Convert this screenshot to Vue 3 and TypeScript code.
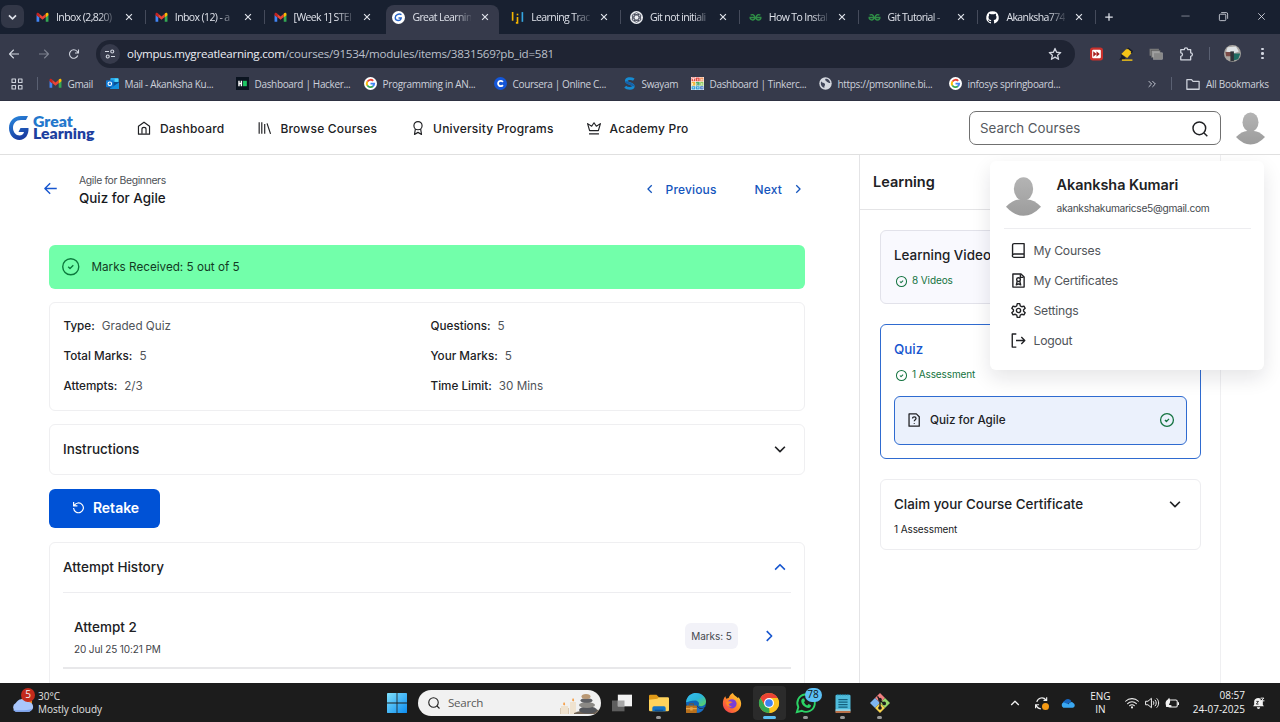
<script setup lang="ts">
import { h } from 'vue'

const gmail =
  '<path fill="#4285f4" d="M1 20V7l5 4v9z"/><path fill="#34a853" d="M18 20v-9l5-4v13z"/><path fill="#ea4335" d="M6 11V5l6 5 6-5v6l-6 5z"/><path fill="#c5221f" d="M1 8V6c0-3 3-3.500 5-1.500V12z"/><path fill="#fbbc04" d="M23 8V6c0-3-3-3.500-5-1.500V12z"/>'
const gfg =
  '<g fill="none" stroke="#2f8d46" stroke-width="2.600"><path d="M1 12h10c0 6-9 6-9 0M3 8c2-2 7-2 8 4M23 12H13c0 6 9 6 9 0M21 8c-2-2-7-2-8 4"/></g>'
const google =
  '<circle cx="12" cy="12" r="12" fill="#fff"/><g fill="none" stroke-width="3.400"><path stroke="#ea4335" d="M17 7.200A6.800 6.800 0 0 0 6.300 8.500"/><path stroke="#fbbc04" d="M6.300 8.300a6.800 6.800 0 0 0 0 7.400"/><path stroke="#34a853" d="M6.200 15.500a6.800 6.800 0 0 0 10.300 1.600"/><path stroke="#4285f4" d="M12 12.300h6.800a6.800 6.800 0 0 1-2.400 4.900"/></g>'

const art: Record<string, string> = {
  gmail,
  gfg,
  google,
  great:
    '<circle cx="12" cy="12" r="12" fill="#fff"/><path d="M17.500 6.500C12 4 6 7 6 12.500c0 6 9.500 7 11 .5h-5" fill="none" stroke="#2563c9" stroke-width="2.600"/>',
  track:
    '<g fill="none" stroke-width="3"><path stroke="#f4b400" d="M3 2v16M12 11v11h-3"/><path stroke="#f4b400" d="M12 5v3"/><path stroke="#35a6e0" d="M21 2v18"/></g>',
  gpt: '<circle cx="12" cy="12" r="12" fill="#eceef2"/><g fill="none" stroke="#22283a" stroke-width="1.300"><ellipse cx="12" cy="12" rx="4.500" ry="9"/><ellipse cx="12" cy="12" rx="4.500" ry="9" transform="rotate(60 12 12)"/><ellipse cx="12" cy="12" rx="4.500" ry="9" transform="rotate(120 12 12)"/></g>',
  github:
    '<path fill="#fff" d="M12 .5a11.500 11.500 0 0 0-3.700 22.400c.6.100.8-.3.800-.6v-2.200c-3.200.7-3.900-1.400-3.900-1.400-.5-1.300-1.300-1.700-1.300-1.700-1-.7.100-.7.100-.7 1.200.1 1.800 1.200 1.800 1.200 1 1.800 2.700 1.300 3.400 1 .1-.8.400-1.300.7-1.600-2.600-.3-5.300-1.300-5.300-5.700 0-1.300.5-2.300 1.200-3.100-.1-.3-.5-1.500.1-3.100 0 0 1-.3 3.200 1.200a11 11 0 0 1 5.800 0C17.100 4.700 18.100 5 18.100 5c.6 1.600.2 2.800.1 3.100.8.800 1.200 1.800 1.200 3.100 0 4.400-2.700 5.400-5.300 5.700.4.400.8 1.100.8 2.200v3.200c0 .3.200.7.800.6A11.500 11.500 0 0 0 12 .5z"/>',
  outlook:
    '<rect x="8" y="2" width="15" height="11" rx="1.500" fill="#28a8ea"/><path fill="#0a4f94" d="M7 9h17v12H7z"/><path fill="#50d9ff" d="M16 3h7v6h-7z"/><path fill="#1490df" d="M7 21l17-11v12H8z"/><rect y="6" width="14" height="13" rx="1.500" fill="#0f78d4"/><circle cx="7" cy="12.500" r="3.300" fill="none" stroke="#fff" stroke-width="2"/>',
  hacker:
    '<path fill="#0b1420" d="M0 0h24v24H0z"/><path stroke="#fff" stroke-width="2.600" d="M5.500 7v10M10 7v10M5 12h5"/><rect x="13" y="7" width="7" height="10" fill="#1dc763"/>',
  coursera:
    '<circle cx="12" cy="12" r="12" fill="#1456d8"/><path d="M16.500 9a5 5 0 1 0 0 6" fill="none" stroke="#fff" stroke-width="3.200"/>',
  swayam:
    '<path d="M20 5C14 1 6 3 6 7.500S19 12 19 17 8 22 4 18" fill="none" stroke="#168bd2" stroke-width="5"/><path d="M6 8c0 4 13 4 13 9" fill="none" stroke="#1560a8" stroke-width="4"/>',
  tinker:
    '<path fill="#fff" d="M0 0h24v24H0z"/><path fill="#e5473c" d="M1 1h7v7H1zM9 1h7v7H9z"/><path fill="#ef7b3b" d="M17 1h6v7h-6z"/><path fill="#f6b73c" d="M1 9h7v7H1z"/><path fill="#4bb36a" d="M9 9h7v7H9z"/><path fill="#8ac75a" d="M17 9h6v7h-6z"/><path fill="#2f9bd8" d="M1 17h7v6H1zM9 17h7v6H9z"/><path fill="#3a6fc4" d="M17 17h6v6h-6z"/><path stroke="#fff" stroke-width="1.500" d="M2 3h5M4.500 3v4M12.500 3v4M19 3v4M22 3v4M3 11v4M11 11v4h3M20 11v4M3 20h3M11 20h3M19 20h3"/>',
  globe:
    '<circle cx="12" cy="12" r="11.500" fill="#d5d8e0"/><path fill="#41465a" d="M4 8c2 4 6 2 7 5s-2 3-1 7C5 19 2 14 4 8zM12 3c6 0 8 4 9 8-3 1-4-2-6-2s-1-3-4-3z"/>',
  down: '<path d="M5.500 9l6.500 6.500L18.500 9"/>',
  up: '<path d="M5.500 15.500L12 9l6.500 6.500"/>',
  left: '<path d="M15 5.500L8.500 12l6.500 6.500"/>',
  right: '<path d="M9 5.500l6.500 6.500L9 18.500"/>',
  close: '<path d="M5 5l14 14M19 5L5 19"/>',
  plus: '<path d="M12 3v18M3 12h18"/>',
  back: '<path d="M22 12H3M11.500 3.500L3 12l8.500 8.500"/>',
  forward: '<path d="M2 12h19M12.500 3.500L21 12l-8.500 8.500"/>',
  reload: '<path d="M19.500 15A8.500 8.500 0 1 1 18 6.500l2.500 3M21 3v7h-7"/>',
  tune: '<path d="M2 7h8M14 17h8"/><circle cx="16.500" cy="7" r="3"/><circle cx="7.500" cy="17" r="3"/>',
  star: '<path d="M12 2.500l2.800 6.500 7 .6-5.300 4.600 1.600 6.900L12 17.400l-6.100 3.700 1.600-6.900L2.200 9.600l7-.6z"/>',
  ffwd: '<rect width="24" height="24" rx="5" fill="#c9302c"/><rect x="4" y="4" width="16" height="16" rx="2" fill="#fff"/><path fill="#a61e1e" d="M6 7l6 5-6 5zM12 7l6 5-6 5z"/>',
  marker:
    '<path fill="#191d28" d="M3 11l8 8-2 3H0l4-5z"/><path fill="#f5c518" d="M13 3l9 7-8 9-10-7z"/><path fill="#191d28" d="M16 1l8 6-2 4-2-1-6-5-1-1z"/><path fill="#f5c518" d="M15 3l6 5-2 3-7-5z"/><path stroke="#f5c518" stroke-width="2.400" d="M5 22.500h18"/>',
  cards:
    '<rect x="1" y="3" width="16" height="12" fill="#777"/><rect x="4" y="6" width="15" height="12" fill="#9a9a9a" stroke="#5c5c5c"/><rect x="8" y="10" width="15" height="11" fill="#888" stroke="#aaa"/>',
  puzzle:
    '<path d="M3 4.500h6c0-4 6-4 6 0h5v5.500c4 0 4 6 0 6v6H3v-6c4 0 4-6 0-6z"/>',
  apps: '<path d="M2 2h7v7H2zM15 2h7v7h-7zM2 15h7v7H2zM15 15h7v7h-7z"/>',
  more: '<path d="M4 5l7 7-7 7M13 5l7 7-7 7"/>',
  folder: '<path d="M1.500 4.500h8l2.500 3h10.500V21H1.500z"/>',
  minimise: '<path d="M3 11h18"/>',
  restore: '<rect x="3" y="7" width="14" height="14" rx="2"/><path d="M7 3.500h11a3 3 0 0 1 3 3V17"/>',
  photo:
    '<circle cx="12" cy="12" r="12" fill="#a9a5a0"/><path fill="#dfe3e6" d="M5 3l12-1 4 7-8 3-10-3z"/><path fill="#7c4c48" d="M2 10h9v6H3z"/><path fill="#1f6b62" d="M13 12h10l-3 8-7 2z"/><path fill="#30343a" d="M9 9h5v14H9z"/>',
  home: '<path d="M2.500 22.500V9L12 2l9.500 7v13.500z"/><path d="M8.500 22v-8c0-4 7-4 7 0v8"/>',
  library: '<path d="M2 2v20M6.500 2v20M11.500 5v17M15.500 4l6 18"/>',
  ribbon: '<circle cx="12" cy="8" r="7"/><path d="M7.500 13.500L6 23l6-3.500 6 3.500-1.500-9.500"/>',
  crown: '<path d="M4.500 16.500L1 4.500l7 4.500 4-6 4 6 7-4.500-3.500 12zM3.500 22h17"/>',
  search: '<circle cx="11" cy="11" r="9.500"/><path d="M18 18l5 5"/>',
  check: '<circle cx="12" cy="12" r="11"/><path d="M8.500 12l2.500 2.500 4.500-4.500"/>',
  retry: '<path d="M4 8.500A9 9 0 1 1 3 13M3 2v7h7"/>',
  quizfile: '<path d="M3.500 1.500H16l5 5v16H3.500z"/><path d="M9.500 9.500c0-4 6-3.500 6 0 0 2-3 2-3 4.500M12.500 17v1.500"/>',
  book: '<path d="M2.500 20V3.500A2.500 2.500 0 0 1 5 1h16v22H5a2.500 2.500 0 0 1 0-5.500h16"/>',
  cert: '<path d="M3 1.500h13l5 5v16H3z"/><path d="M15 2v5h5"/><circle cx="12" cy="10.500" r="3"/><path d="M10 13l-1.500 6 3.500-1.500 3.500 1.500L14 13"/>',
  gear: '<path d="M10 1h4l.8 3.500 2.500 1.500 3.400-1 2 3.500-2.600 2.400v2.200l2.600 2.400-2 3.500-3.400-1-2.500 1.500L14 23h-4l-.8-3.500L6.700 18l-3.400 1-2-3.500 2.600-2.400v-2.200L1.300 8.500l2-3.500 3.400 1 2.500-1.500z"/><circle cx="12" cy="12" r="3.400"/>',
  logout: '<path d="M8.500 1.500H2v21h6.500M8 12h14M16.500 6.500L22 12l-5.500 5.500"/>',
  cloudsun:
    '<circle cx="16" cy="11" r="6" fill="#f28b22"/><path fill="#a9c6fb" d="M5 21a5 5 0 0 1 0-9 7 7 0 0 1 12-1 5 5 0 0 1 2 10z"/><path fill="#7da4ef" d="M2 19c4 1 15 1 20-1-1 2-2 3-4 3H5c-1 0-2-1-3-2z"/>',
  windows:
    '<linearGradient id="win" x1="0" y1="0" x2="1" y2="1"><stop stop-color="#7fe0fb"/><stop offset="1" stop-color="#0c8cf0"/></linearGradient><path fill="url(#win)" d="M0 1a1 1 0 0 1 1-1h10.500v11.500H0zM12.500 0H23a1 1 0 0 1 1 1v10.500H12.500zM0 12.500h11.500V24H1a1 1 0 0 1-1-1zM12.500 12.500H24V23a1 1 0 0 1-1 1H12.500z"/>',
  taskview:
    '<path fill="#5d5d5d" d="M0 9h15v13H0z"/><path fill="#f2f2f2" d="M7 2h17v14H7z"/><path fill="#a7a7a7" d="M7 9h8v7H7z"/>',
  explorer:
    '<path fill="#e09a17" d="M0 3.500A1.500 1.500 0 0 1 1.500 2H9l3 3v5H0z"/><path fill="#ffd35c" d="M0 8l10-1 2-2h10.500A1.500 1.500 0 0 1 24 6.500v14a1.500 1.500 0 0 1-1.500 1.500h-21A1.500 1.500 0 0 1 0 20.500z"/><path fill="#1573c4" d="M4 22v-4a2 2 0 0 1 2-2h12a2 2 0 0 1 2 2v4z"/><path fill="#0b559c" d="M7 20h10v2H7z"/>',
  edge:
    '<linearGradient id="ed" x1="0" y1="0" x2="1" y2="1"><stop stop-color="#36bff0"/><stop offset=".5" stop-color="#2bb5d8"/><stop offset="1" stop-color="#62d84e"/></linearGradient><circle cx="12" cy="12" r="12" fill="#1164b8"/><path fill="url(#ed)" d="M0 11C1 3 7 0 12 0c8 0 12 6 12 10 0 5-5 7-9 5 2-3-1-6-4-6-5 0-9 2-11 2z"/><path fill="#1c1c1c" d="M13 14c1 5 6 5 10 3l1 1-3 6h-8z"/><path fill="#1b6fc4" d="M12 12c1 7 6 8 10 6-2 4-5 6-9 6z"/><rect y="15" width="13" height="9" rx="1" fill="#b8701c"/><path fill="#e7a548" d="M0 18h13v1.500H0zM5 17h3v4H5z"/><path fill="none" stroke="#8b5318" d="M4 15v-2h5v2"/>',
  firefox:
    '<linearGradient id="ff" x1="1" y1="0" x2="0" y2="1"><stop stop-color="#ffdf3c"/><stop offset=".5" stop-color="#ff8a25"/><stop offset="1" stop-color="#f02d59"/></linearGradient><path fill="url(#ff)" d="M4 4l1 3 3-1c1-3 3-5 5-6 1 3 4 4 6 6l1-1c2 3 3 5 3 8 0 6-5 11-11 11S1 19 1 13c0-4 1-7 3-9z"/><circle cx="12" cy="13" r="5.500" fill="#7b3fd8"/><path fill="#ff8a25" d="M5 11c3-2 5-1 8 0-2 0-3 2-5 2 0 2 2 3 4 3-4 2-7-1-7-5z"/>',
  chrome:
    '<circle cx="12" cy="12" r="12" fill="#fcc31e"/><path fill="#ea4335" d="M1.600 6A12 12 0 0 1 22.400 6H12l-5 9z"/><path fill="#34a853" d="M1.600 6l5.200 9 5.200 3 1 5.950A12 12 0 0 1 1.600 6z"/><path fill="#fcc31e" d="M12 6h10.400A12 12 0 0 1 12 24l5.200-9z"/><circle cx="12" cy="12" r="6" fill="#fff"/><circle cx="12" cy="12" r="4.600" fill="#3d82f0"/>',
  whatsapp:
    '<path fill="#1c1c1c" stroke="#2bd366" stroke-width="2.300" d="M1 23l1.800-6A10.500 10.500 0 1 1 7 21.300z"/><path fill="#2bd366" d="M8 6.500l1.800.2 1 2.800-1.200 1.500c1 2 2 3 4 4l1.500-1.700 2.900 1.500c0 2-1.300 3.200-3.200 3.200-4 0-8.500-4.300-8.500-8.300 0-1.700.7-2.700 1.700-3.200z"/>',
  notepad:
    '<rect x="3" y="2" width="18" height="21" rx="1.500" fill="#4fbcdc"/><path fill="#e8f4f8" d="M3 20h18v1H3z"/><path fill="#b8704a" d="M3 21.500h18V24H3z"/><path stroke="#14607e" stroke-width="1.400" d="M6.500 8h11M6.500 11h11M6.500 14h11M6.500 17h11"/><path stroke="#146a8a" stroke-width="1.600" stroke-dasharray="1.500 1.500" d="M5 2h14"/>',
  git: '<path fill="#f08080" d="M12 0l6 6-6 6-6-6z"/><path fill="#7fb5ee" d="M6 6l6 6-6 6-6-6z"/><path fill="#97d86c" d="M18 6l6 6-6 6-6-6z"/><path fill="#f5d24f" d="M12 12l6 6-6 6-6-6z"/><g fill="#1c1c1c" stroke="#1c1c1c" stroke-width="1.600"><path fill="none" d="M9 4l3 5v10M12 9l5 4"/><circle cx="12" cy="18" r="1.400"/><circle cx="12" cy="8" r="1.400"/><circle cx="17" cy="12.500" r="1.400"/></g>',
  sync: '<g fill="none" stroke="#eee" stroke-width="2"><path d="M3 10a9 9 0 0 1 16-3M20 2v5.500h-5.500M2 15a9 9 0 0 0 8 7M1 21v-6h6"/></g><circle cx="18" cy="18" r="6" fill="#f59a13"/>',
  onedrive:
    '<path fill="#1566c0" d="M4 17A6 6 0 0 1 6 8a7 7 0 0 1 12 1l-8 6z"/><path fill="#3aa8f2" d="M4 20a5 5 0 0 1 0-9c4 0 5 2 9 3 2-4 6-5 8-2 4 2 3 8-1 8z"/>',
  wifi: '<g fill="none" stroke="#f2f2f2" stroke-width="1.800" stroke-linecap="round"><path d="M1 9c6-6 16-6 22 0M4.500 13c4-4 11-4 15 0M8 16.500c2-2 6-2 8 0"/></g><circle cx="12" cy="19.500" r="1.800" fill="#f2f2f2"/>',
  volume:
    '<g fill="none" stroke="#f2f2f2" stroke-width="1.700" stroke-linejoin="round"><path d="M1 9h4l6-5v16l-6-5H1zM14 9c1.500 1.500 1.500 4.500 0 6M17 6.500c3 3 3 8 0 11M20 4c4.500 4.500 4.500 11.500 0 16"/></g>',
  battery:
    '<rect x="6" y="7" width="15" height="12" rx="2.500" fill="none" stroke="#f2f2f2" stroke-width="1.800"/><path stroke="#f2f2f2" stroke-width="2" d="M23 10.500v5"/><path fill="#f2f2f2" d="M1 13C1 7 5 7 7 3c3 5 2 10-1 12l5 1v3H2z"/>',
  bell: '<path fill="#f2f2f2" d="M2 18l2-3V9c0-6 8-8 12-5v3h4v8l2 3zM9 20h6c0 4-6 4-6 0z"/><path fill="none" stroke="#1c1c1c" stroke-width="1.600" d="M8 9h4l-4 5h4"/><path fill="none" stroke="#f2f2f2" stroke-width="1.800" d="M16 3h6l-5 5h6"/>',
  stones:
    '<path fill="#d9c9b4" d="M0 18h9v6H0z"/><path fill="#efe2cf" d="M1 16h7v8H1zM10 12h6v12h-6z"/><path fill="#f6a04a" d="M4 12q2 2 .5 3.500Q2 15 4 12zM13 8q2 2 .5 3.500Q11 11 13 8z"/><path fill="#6f6254" d="M14 23q12-5 27-3l-4 4H14z"/><ellipse cx="28" cy="20" rx="9" ry="3.500" fill="#54565b"/><ellipse cx="27" cy="15" rx="8" ry="3" fill="#8b8985"/><ellipse cx="26.500" cy="10.500" rx="6" ry="2.300" fill="#5f6064"/><ellipse cx="26" cy="6.500" rx="4.500" ry="2.500" fill="#b99874"/>',
  person:
    '<linearGradient id="grey" x1="0" y1="0" x2="0" y2="32" gradientUnits="userSpaceOnUse"><stop stop-color="#b4b4b4"/><stop offset="1" stop-color="#9c9c9c"/></linearGradient><g fill="url(#grey)"><ellipse cx="14.500" cy="9.700" rx="8" ry="9.700"/><path d="M0 24.500Q6 18.500 11 18.500h7q5 0 11 6Q22 32 14.500 32T0 24.500z"/></g>',
}

interface IconProps {
  name: string
  box?: string
}
const Icon = (props: IconProps) =>
  h('svg', { viewBox: props.box ?? '0 0 24 24', class: 'icon', innerHTML: art[props.name] })
Icon.props = ['name', 'box']

const tabs = [
  { icon: 'gmail', title: 'Inbox (2,820)' },
  { icon: 'gmail', title: 'Inbox (12) - a' },
  { icon: 'gmail', title: '[Week 1] STEI' },
  { icon: 'great', title: 'Great Learnin', active: true },
  { icon: 'track', title: 'Learning Trac' },
  { icon: 'gpt', title: 'Git not initiali' },
  { icon: 'gfg', title: 'How To Instal' },
  { icon: 'gfg', title: 'Git Tutorial -' },
  { icon: 'github', title: 'Akanksha774' },
]
const bookmarks = [
  { icon: 'gmail', title: 'Gmail' },
  { icon: 'outlook', title: 'Mail - Akanksha Ku...' },
  { icon: 'hacker', title: 'Dashboard | Hacker...' },
  { icon: 'google', title: 'Programming in AN...' },
  { icon: 'coursera', title: 'Coursera | Online C...' },
  { icon: 'swayam', title: 'Swayam' },
  { icon: 'tinker', title: 'Dashboard | Tinkerc...' },
  { icon: 'globe', title: 'https://pmsonline.bi...' },
  { icon: 'google', title: 'infosys springboard...' },
]
const nav = [
  { icon: 'home', label: 'Dashboard' },
  { icon: 'library', label: 'Browse Courses' },
  { icon: 'ribbon', label: 'University Programs' },
  { icon: 'crown', label: 'Academy Pro' },
]
const facts = [
  ['Type:', 'Graded Quiz'],
  ['Questions:', '5'],
  ['Total Marks:', '5'],
  ['Your Marks:', '5'],
  ['Attempts:', '2/3'],
  ['Time Limit:', '30 Mins'],
]
const menu = [
  { icon: 'book', label: 'My Courses' },
  { icon: 'cert', label: 'My Certificates' },
  { icon: 'gear', label: 'Settings' },
  { icon: 'logout', label: 'Logout' },
]
const apps = [
  { icon: 'taskview' },
  { icon: 'explorer', running: true },
  { icon: 'edge' },
  { icon: 'firefox' },
  { icon: 'chrome', running: true, focused: true },
  { icon: 'whatsapp', running: true, count: 78 },
  { icon: 'notepad', running: true },
  { icon: 'git', running: true },
]
</script>

<template>
  <div class="screen">
    <div class="tabstrip">
      <div class="tabsearch"><Icon name="down" class="line" /></div>
      <div v-for="(t, i) in tabs" :key="i" class="tab" :class="{ active: t.active, bare: i === 2 || t.active }">
        <Icon :name="t.icon" class="fav" />
        <span class="tabtitle">{{ t.title }}</span>
        <Icon name="close" class="line x" />
      </div>
      <Icon name="plus" class="line newtab" />
      <div class="controls">
        <Icon name="minimise" class="line thin dim" />
        <Icon name="restore" class="line thin" />
        <Icon name="close" class="line thin" />
      </div>
    </div>

    <div class="toolbar">
      <div class="navbtns">
        <Icon name="back" class="line" />
        <Icon name="forward" class="line off" />
        <Icon name="reload" class="line" />
      </div>
      <div class="omnibox">
        <div class="site"><Icon name="tune" class="line" /></div>
        <span class="url"><b>olympus.mygreatlearning.com</b>/courses/91534/modules/items/3831569?pb_id=581</span>
        <Icon name="star" class="line star" />
      </div>
      <div class="exts">
        <Icon name="ffwd" class="ff" />
        <Icon name="marker" />
        <Icon name="cards" />
        <Icon name="puzzle" class="line" />
      </div>
      <i class="bar"></i>
      <Icon name="photo" class="photo" />
      <div class="dots"><i></i><i></i><i></i></div>
    </div>

    <div class="bookmarks">
      <Icon name="apps" class="line appgrid" />
      <i class="bar first"></i>
      <div class="marks">
        <div v-for="b in bookmarks" :key="b.title" class="mark">
          <Icon :name="b.icon" class="fav" />
          <span>{{ b.title }}</span>
        </div>
      </div>
      <Icon name="more" class="line more" />
      <i class="bar"></i>
      <Icon name="folder" class="line folder" />
      <span class="all">All Bookmarks</span>
    </div>

    <header class="sitehead">
      <div class="logo">
        <svg class="g" viewBox="0 0 20 26">
          <defs>
            <linearGradient id="lg" x1="0" y1="0" x2="0.400" y2="1">
              <stop stop-color="#2a8be0" />
              <stop offset="1" stop-color="#1a3fa3" />
            </linearGradient>
          </defs>
          <path
            d="M19 1l-2 4h-5C7 5 4 8.500 4 13c0 4 3 7.500 6.500 7.500 2.500 0 4-1.500 4.500-3.500h-5.500l2-4h8c.5 7-3.500 12-9 12C4.500 25 0 19.500 0 13 0 6 5 1 12 1z"
            fill="url(#lg)"
          />
        </svg>
        <div class="brand"><span>Great</span><span class="deep">Learning</span></div>
      </div>
      <nav>
        <a v-for="n in nav" :key="n.label" :class="n.icon"><Icon :name="n.icon" class="line" /><span>{{ n.label }}</span></a>
      </nav>
      <div class="search"><span>Search Courses</span><Icon name="search" class="line" /></div>
      <Icon name="person" box="0 0 29 32" class="person small" />
    </header>

    <div class="page">
      <main>
        <div class="title">
          <Icon name="back" class="line goback" />
          <div class="names"><small>Agile for Beginners</small><h1>Quiz for Agile</h1></div>
          <a class="prev"><Icon name="left" class="line" />Previous</a>
          <a class="next">Next<Icon name="right" class="line" /></a>
        </div>
        <div class="banner"><Icon name="check" class="line" />Marks Received: 5 out of 5</div>
        <dl class="card facts">
          <div v-for="f in facts" :key="f[0]"><dt>{{ f[0] }}</dt><dd>{{ f[1] }}</dd></div>
        </dl>
        <div class="card instructions"><h2>Instructions</h2><Icon name="down" class="line" /></div>
        <button class="retake"><Icon name="retry" class="line" />Retake</button>
        <section class="card history">
          <div class="hhead"><h2>Attempt History</h2><Icon name="up" class="line" /></div>
          <div class="attempt">
            <div class="when"><h2>Attempt 2</h2><small>20 Jul 25 10:21 PM</small></div>
            <span class="badge">Marks: 5</span>
            <Icon name="right" class="line" />
          </div>
        </section>
      </main>

      <aside>
        <div class="lhead">Learning</div>
        <div class="modules">
          <div class="module videos">
            <h3>Learning Videos</h3>
            <p class="done"><Icon name="check" class="line" />8 Videos</p>
          </div>
          <div class="module quiz">
            <h3>Quiz</h3>
            <p class="done"><Icon name="check" class="line" />1 Assessment</p>
            <div class="lesson">
              <Icon name="quizfile" class="line" /><span>Quiz for Agile</span><Icon name="check" class="line ok" />
            </div>
          </div>
          <div class="module claim">
            <h3>Claim your Course Certificate<Icon name="down" class="line" /></h3>
            <p>1 Assessment</p>
          </div>
        </div>
      </aside>

      <div class="menu">
        <div class="who">
          <Icon name="person" box="0 0 29 32" class="person" />
          <div><strong>Akanksha Kumari</strong><span>akankshakumaricse5@gmail.com</span></div>
        </div>
        <a v-for="m in menu" :key="m.label"><Icon :name="m.icon" class="line" />{{ m.label }}</a>
      </div>
    </div>

    <footer class="taskbar">
      <div class="weather">
        <div class="wicon"><Icon name="cloudsun" /><em>5</em></div>
        <div class="wtext"><span>30°C</span><span>Mostly cloudy</span></div>
      </div>
      <Icon name="windows" class="win" />
      <div class="find"><Icon name="search" class="line" /><span>Search</span><Icon name="stones" box="0 0 41 26" class="stones" /></div>
      <div class="apps">
        <div v-for="a in apps" :key="a.icon" class="app" :class="{ running: a.running, focused: a.focused }">
          <Icon :name="a.icon" />
          <em v-if="a.count">{{ a.count }}</em>
        </div>
      </div>
      <div class="tray">
        <Icon name="up" class="line chev" />
        <Icon name="sync" class="sync" />
        <Icon name="onedrive" class="drive" />
        <div class="lang"><span>ENG</span><span>IN</span></div>
        <Icon name="wifi" class="st" />
        <Icon name="volume" class="st" />
        <Icon name="battery" class="st" />
        <div class="clock"><span>08:57</span><span>24-07-2025</span></div>
        <Icon name="bell" class="bell" />
      </div>
    </footer>
  </div>
</template>

<style>
html,
body {
  overflow: hidden;
}
</style>

<style scoped>
* {
  box-sizing: border-box;
}
.screen {
  width: 1280px;
  height: 722px;
  display: flex;
  flex-direction: column;
  overflow: hidden;
  background: #fff;
  font-family: Inter, sans-serif;
  color: #202124;
  white-space: nowrap;
}
.icon {
  display: block;
  flex: none;
  width: 14px;
  height: 14px;
  overflow: visible;
}
.line {
  fill: none;
  stroke: currentColor;
  stroke-width: 2.2;
  stroke-linejoin: round;
}
.thin {
  stroke-width: 1.8;
}
h1,
h2,
h3,
p,
dl,
dd {
  margin: 0;
}

/* Browser window */
.tabstrip,
.toolbar,
.bookmarks,
.taskbar {
  font-family: 'Open Sans', 'Noto Sans', sans-serif;
}
.tabstrip {
  flex: none;
  height: 34px;
  display: flex;
  background: #182030;
  color: #dfe2ea;
  font-size: 10.500px;
}
.tabsearch {
  width: 23px;
  height: 23px;
  margin: 5px 6px 0 1px;
  border-radius: 7px;
  background: #323747;
  display: flex;
  align-items: center;
  justify-content: center;
}
.tabsearch .icon {
  stroke-width: 3;
  width: 13px;
}
.tab {
  position: relative;
  width: 118.800px;
  height: 34px;
  flex: none;
  display: flex;
  align-items: center;
  padding-left: 6px;
}
.tab::after {
  content: '';
  position: absolute;
  left: 115px;
  top: 10px;
  width: 1px;
  height: 14px;
  background: #454b5b;
}
.tab.bare::after {
  display: none;
}
.tab.active::before {
  content: '';
  position: absolute;
  left: 0;
  top: 5px;
  width: 113px;
  height: 29px;
  border-radius: 8px 8px 0 0;
  background: #363a4b;
}
.tab .icon,
.tabtitle {
  position: relative;
}
.fav {
  width: 13px;
  height: 13px;
}
.tabtitle {
  width: 59px;
  margin-left: 7px;
  overflow: hidden;
  letter-spacing: -0.6px;
  line-height: 18px;
  mask-image: linear-gradient(90deg, #000 72%, rgba(0, 0, 0, 0.15));
}
.x {
  width: 10px;
  height: 10px;
  margin-left: 9px;
  stroke-width: 2.8;
}
.newtab {
  width: 10px;
  height: 10px;
  margin: 12px 0 0 5px;
  stroke-width: 3;
}
.controls {
  margin-left: auto;
  display: flex;
  gap: 27px;
  padding: 11px 13px 0 0;
}
.controls .icon {
  width: 11px;
  height: 11px;
}
.dim {
  opacity: 0.6;
}
.toolbar {
  flex: none;
  height: 35px;
  padding-top: 4px;
  display: flex;
  align-items: center;
  background: #363a4b;
  color: #d2d6e0;
}
.navbtns {
  display: flex;
  gap: 18px;
  margin: 0 16px 0 8px;
}
.navbtns .icon {
  width: 12px;
  height: 12px;
}
.off {
  opacity: 0.45;
}
.omnibox {
  width: 979px;
  height: 28px;
  border-radius: 14px;
  background: #1f2433;
  display: flex;
  align-items: center;
  padding: 0 13px 0 4px;
}
.site {
  width: 20px;
  height: 20px;
  border-radius: 50%;
  background: #363a4b;
  display: flex;
  align-items: center;
  justify-content: center;
}
.site .icon {
  width: 12px;
  height: 12px;
}
.url {
  margin-left: 7px;
  flex: 1;
  font-size: 11.600px;
  letter-spacing: -0.24px;
  color: #bcc0cb;
}
.url b {
  font-weight: 400;
  color: #eceef4;
}
.exts {
  display: flex;
  gap: 16px;
  margin-left: 15px;
}
.exts .ff {
  width: 13px;
}
.bar {
  width: 1px;
  height: 13px;
  background: #5a6072;
}
.toolbar > .bar {
  margin: 0 14px 0 16px;
}
.photo {
  width: 17px;
  height: 17px;
}
.dots {
  display: flex;
  flex-direction: column;
  gap: 2px;
  margin-left: 20px;
}
.dots i {
  width: 2.500px;
  height: 2.500px;
  border-radius: 50%;
  background: #d2d6e0;
}
.bookmarks {
  flex: none;
  height: 32px;
  display: flex;
  align-items: center;
  padding-bottom: 2px;
  background: #363a4b;
  color: #cdd1db;
  font-size: 10px;
  border-bottom: 1px solid #2e3242;
}
.appgrid {
  width: 12px;
  height: 12px;
  margin: 0 14px 0 11px;
}
.bar.first {
  margin-right: 11px;
}
.marks {
  width: 1098px;
  display: grid;
  grid-template-columns: 57px 130px 128px 130px 129px 68px 128px 130px 1fr;
  letter-spacing: -0.33px;
}
.mark {
  display: flex;
  align-items: center;
  gap: 5.500px;
}
.more {
  width: 10px;
  height: 10px;
}
.more + .bar {
  margin: 0 14px;
}
.folder {
  width: 14px;
  height: 14px;
}
.all {
  margin-left: 6px;
  letter-spacing: -0.3px;
}

/* Site header */
.sitehead {
  flex: none;
  height: 54px;
  display: flex;
  align-items: center;
  border-bottom: 1px solid #e0e0e0;
  padding-left: 9px;
}
.logo {
  display: flex;
  width: 128px;
  gap: 4px;
}
.g {
  width: 20px;
  height: 26px;
}
.brand {
  font: 800 15.800px/12px Lato, sans-serif;
  color: #2377cc;
  display: flex;
  flex-direction: column;
}
.deep {
  color: #1d3fa0;
}
nav {
  display: flex;
  gap: 34px;
  flex: 1;
  font-size: 12px;
  font-weight: 500;
  letter-spacing: 0.2px;
}
nav a {
  display: flex;
  align-items: center;
  gap: 9px;
}
nav a span {
  padding-top: 1px;
}
nav .library,
nav .ribbon {
  gap: 8px;
}
nav .crown {
  margin-left: -1px;
}
nav .icon {
  stroke-width: 2;
}
.search {
  width: 252px;
  height: 34px;
  border: 1px solid #707070;
  border-radius: 7px;
  display: flex;
  align-items: center;
  justify-content: space-between;
  padding: 0 12px 0 10px;
  font-size: 13.300px;
  color: #555960;
}
.search .icon {
  width: 16px;
  height: 16px;
  margin-top: 2px;
  color: #202124;
  stroke-width: 2.2;
}
.person {
  width: 35px;
  height: 39px;
}
.person.small {
  width: 29px;
  height: 33px;
  margin: 1px 15px 0;
}

/* Course page */
.page {
  position: relative;
  height: 528px;
  display: flex;
  overflow: hidden;
}
main {
  width: 859px;
  padding: 0 54px 0 49px;
  display: flex;
  flex-direction: column;
  align-items: flex-start;
}
main > * {
  flex: none;
}
.title {
  height: 90px;
  align-self: stretch;
  display: flex;
  align-items: center;
  padding-bottom: 22px;
  font-size: 12px;
  font-weight: 500;
  color: #1455bd;
}
.goback {
  width: 15px;
  height: 15px;
  margin: -1px 0 0 -6px;
  color: #1756cf;
}
.names {
  margin-left: 21px;
  flex: 1;
  color: #17191d;
}
.names small {
  display: block;
  font-size: 10.400px;
  letter-spacing: -0.36px;
  line-height: 15px;
  font-weight: 400;
  color: #4d5156;
  margin-top: 4px;
}
h1 {
  font-size: 13.400px;
  line-height: 21px;
  font-weight: 500;
}
.title a {
  display: flex;
  align-items: center;
  letter-spacing: 0.15px;
}
.prev {
  gap: 9px;
  margin-right: 38px;
}
.next {
  gap: 9px;
}
.banner {
  align-self: stretch;
  height: 43.500px;
  border-radius: 6px;
  background: #72ffaa;
  display: flex;
  align-items: center;
  gap: 12px;
  padding-left: 13px;
  font-size: 11.700px;
  color: #123b24;
}
.banner .icon {
  width: 17.500px;
  height: 17.500px;
  color: #0c7a3d;
  stroke-width: 1.9;
}
.card {
  align-self: stretch;
  border: 1px solid #efeff1;
  border-radius: 6px;
}
.facts {
  height: 108.500px;
  margin-top: 13.500px;
  padding: 7.500px 13.500px;
  display: grid;
  grid-template-columns: 367px 1fr;
  grid-auto-rows: 30px;
  font-size: 11.700px;
}
.facts div {
  display: flex;
  align-items: center;
  gap: 7px;
}
dt {
  font-weight: 500;
}
dd {
  color: #505459;
}
.instructions {
  margin-top: 13.500px;
  height: 51px;
}
.instructions,
.hhead {
  display: flex;
  align-items: center;
  justify-content: space-between;
  padding: 0 15px 1px 13px;
}
h2 {
  font-size: 13.500px;
  font-weight: 500;
}
.instructions .icon,
.hhead .icon {
  width: 18px;
  height: 18px;
}
.retake {
  width: 111px;
  height: 39px;
  margin: 14px 0;
  padding: 0 0 2px 2px;
  border: 0;
  border-radius: 6px;
  background: #0052d6;
  color: #fff;
  display: flex;
  align-items: center;
  justify-content: center;
  gap: 8px;
  font: 600 14px Inter, sans-serif;
}
.retake .icon {
  width: 13px;
  height: 13px;
}
.history {
  height: 200px;
  padding: 0 13px;
}
.hhead {
  height: 50px;
  padding: 0 2px 1px 0;
  border-bottom: 1px solid #ededf0;
}
.hhead .icon,
.attempt .icon {
  color: #1756cf;
}
.attempt {
  height: 76px;
  border-bottom: 2px solid #e8e8ea;
  display: flex;
  align-items: center;
  padding: 12px 13px 0 11px;
}
.when {
  flex: 1;
  line-height: 21px;
  padding-top: 5px;
}
.when small {
  display: block;
  margin-top: 1px;
  font-size: 10px;
  letter-spacing: -0.12px;
  color: #3f4348;
}
.badge {
  width: 53px;
  height: 26px;
  border-radius: 6px;
  background: #f2f2f8;
  font-size: 10px;
  letter-spacing: -0.1px;
  line-height: 26px;
  text-align: center;
  color: #44484e;
  margin-right: 22px;
}
.attempt .icon {
  width: 18px;
  height: 18px;
}
aside {
  width: 362px;
  border-left: 1px solid #e4e4e6;
  border-right: 1px solid #efeff1;
}
.lhead {
  height: 55px;
  border-bottom: 1px solid #e4e4e6;
  padding-left: 13px;
  font-size: 14.500px;
  font-weight: 600;
  line-height: 54px;
}
.modules {
  padding: 20px 19px 0 20px;
  display: flex;
  flex-direction: column;
  gap: 20px;
}
.module {
  border: 1px solid #ededf0;
  border-radius: 6px;
  padding: 13px;
}
.videos {
  height: 74px;
  background: #f9f9fe;
  border-color: #e2e2ea;
}
.quiz {
  height: 135px;
  border-color: #2f6bd0;
}
.quiz h3 {
  color: #1756cf;
}
.claim {
  height: 71px;
}
h3 {
  display: flex;
  align-items: center;
  justify-content: space-between;
  font-size: 13.400px;
  line-height: 22px;
  font-weight: 500;
}
h3 .icon {
  width: 18px;
  height: 18px;
  margin-right: 3px;
}
.module p {
  display: flex;
  align-items: center;
  gap: 5px;
  margin-top: 6px;
  font-size: 10px;
  letter-spacing: -0.1px;
  line-height: 17px;
}
.done {
  color: #147340;
  padding-left: 2px;
}
.done .icon {
  width: 11px;
  height: 11px;
  margin-top: 1px;
}
.lesson {
  height: 49px;
  margin-top: 13px;
  border: 1px solid #2f6bd0;
  border-radius: 6px;
  background: #ebf1fc;
  display: flex;
  align-items: center;
  padding: 0 12px 1px;
  font-size: 11.700px;
  font-weight: 500;
}
.lesson span {
  flex: 1;
  margin-left: 9px;
}
.ok {
  color: #147340;
}

/* Account menu */
.menu {
  position: absolute;
  left: 990px;
  top: 6px;
  width: 274px;
  height: 209px;
  border-radius: 6px;
  background: #fff;
  box-shadow: 0 8px 20px rgba(20, 20, 40, 0.11);
  padding: 0 13px 0 14px;
  display: flex;
  flex-direction: column;
}
.who {
  display: flex;
  height: 68px;
  margin-bottom: 6px;
  gap: 15.500px;
  padding: 15.500px 2px 0;
  border-bottom: 1px solid #ededf0;
}
.who strong,
.who span {
  display: block;
}
.who strong {
  font-size: 14.400px;
  line-height: 20px;
  font-weight: 600;
  margin-top: -1.500px;
}
.who span {
  font-size: 10.200px;
  letter-spacing: -0.3px;
  line-height: 16px;
  margin-top: 4.500px;
  color: #44484e;
}
.menu a {
  height: 30px;
  display: flex;
  align-items: center;
  gap: 8px;
  padding-left: 6.500px;
  font-size: 12.200px;
  letter-spacing: -0.22px;
  color: #505459;
}
.menu a .icon {
  color: #202124;
  width: 15px;
  height: 15px;
}

/* Taskbar */
.taskbar {
  flex: none;
  height: 39px;
  display: flex;
  align-items: center;
  background: #1c1c1c;
  color: #f2f2f2;
  font-size: 10px;
  line-height: 13.500px;
}
.taskbar span {
  display: block;
}
.weather {
  width: 387px;
  display: flex;
  padding-left: 11px;
}
.wicon {
  position: relative;
  width: 27px;
}
.wicon .icon {
  width: 23px;
  height: 26px;
  margin-top: 1px;
}
em {
  position: absolute;
  font-style: normal;
  text-align: center;
}
.wicon em {
  left: 10px;
  top: -1px;
  width: 14px;
  height: 14px;
  border-radius: 50%;
  background: #c42b1c;
}
.wtext {
  padding-top: 1px;
}
.wtext span {
  color: #e2e2e2;
}
.win {
  width: 20px;
  height: 20px;
}
.find {
  width: 183px;
  height: 26px;
  margin: 0 2.600px 0 11px;
  border-radius: 13px;
  background: #f1f1f1;
  color: #5a5a5a;
  display: flex;
  align-items: center;
  font-size: 11.600px;
  letter-spacing: -0.25px;
  padding-left: 10px;
  overflow: hidden;
}
.find .line {
  width: 12px;
  height: 12px;
  color: #222;
}
.find span {
  flex: 1;
  margin-left: 8px;
}
.find .stones {
  width: 41px;
  height: 26px;
}
.apps {
  display: flex;
}
.app {
  position: relative;
  width: 36.800px;
  height: 39px;
  padding-top: 10px;
  display: flex;
  justify-content: center;
}
.app .icon {
  width: 20px;
  height: 20px;
  position: relative;
}
.running::after {
  content: '';
  position: absolute;
  bottom: 3px;
  width: 5px;
  height: 3px;
  border-radius: 2px;
  background: #999;
}
.focused::before {
  content: '';
  position: absolute;
  inset: 3px 2px 2px;
  border-radius: 4px;
  background: #2b2b2b;
}
.focused::after {
  width: 13px;
  background: #5cc0f5;
}
.app em {
  left: 17px;
  top: 5px;
  width: 17px;
  height: 14px;
  border-radius: 7px;
  background: #5cc0f5;
  color: #111;
}
.tray {
  flex: 1;
  display: flex;
  align-items: center;
}
.chev {
  width: 14px;
  margin-left: 110px;
}
.sync {
  margin-left: 13px;
}
.drive {
  margin-left: 12px;
}
.lang {
  width: 25px;
  margin-left: 13px;
  padding-top: 1px;
  text-align: center;
}
.lang + .st {
  margin-left: 12px;
}
.st {
  margin-right: 6px;
}
.clock {
  flex: 1;
  text-align: right;
}
.bell {
  width: 13px;
  margin: 0 15px 0 7px;
}
</style>
